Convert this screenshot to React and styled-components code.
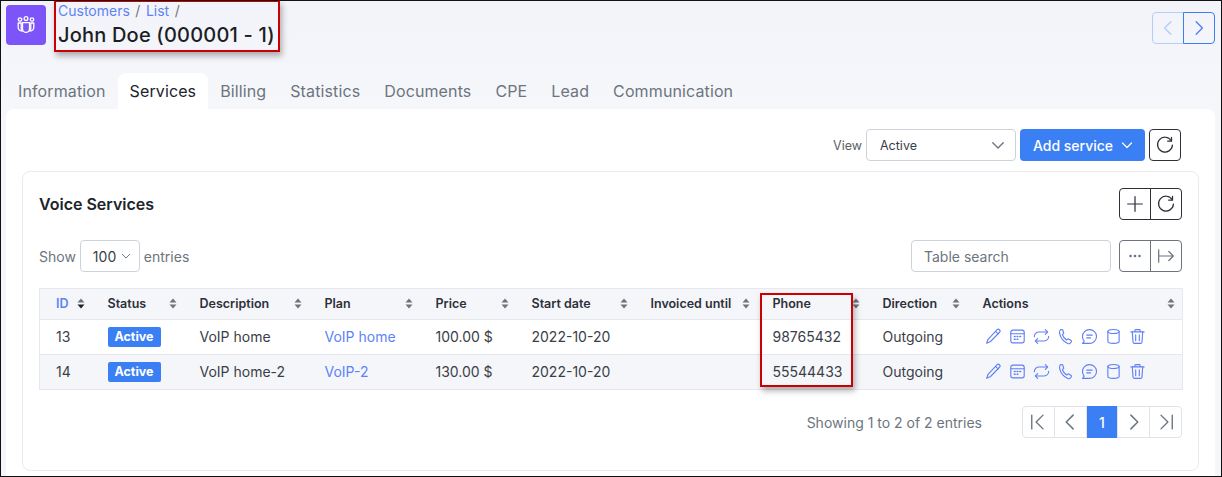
import React from "react";
import styled, { createGlobalStyle } from "styled-components";

const GlobalStyle = createGlobalStyle`
  html, body {
    margin: 0;
    padding: 0;
    background: #fff;
  }
  * {
    box-sizing: border-box;
  }
`;

const Frame = styled.div`
  position: relative;
  width: 1222px;
  height: 477px;
  border: 1px solid #111;
  background: linear-gradient(#f3f4f9, #f6f7fb 110px);
  font-family: Inter, "Noto Sans", sans-serif;
  font-size: 14px;
  color: #2d3039;
  overflow: hidden;
  display: flex;
  flex-direction: column;
`;

const Header = styled.header`
  height: 72px;
  padding: 4px 6px 0 5px;
  display: flex;
  align-items: flex-start;
`;

const Logo = styled.div`
  width: 40px;
  height: 40px;
  border-radius: 4px;
  background: #7c54f8;
  display: flex;
  align-items: center;
  justify-content: center;
  color: #fff;
`;

const TitleBlock = styled.div`
  margin-left: 12px;
  flex: 1;
`;

const Crumbs = styled.div`
  display: flex;
  gap: 5.5px;
  line-height: 14px;
  margin-top: -1px;
  color: #6c757d;
  font-size: 14px;
`;

const Crumb = styled.a`
  color: #5c83f7;
`;

const Title = styled.h1`
  margin: 5px 0 0 0;
  font-size: 20px;
  line-height: 24px;
  font-weight: 500;
  letter-spacing: 0.2px;
  color: #1b1e26;
`;

const PagerGroup = styled.div`
  display: flex;
  margin-top: 7px;
`;

const NavButton = styled.div`
  width: 32px;
  height: 32px;
  display: flex;
  align-items: center;
  justify-content: center;
  color: ${(p) => (p.$off ? "#b3cbfa" : "#4f7df5")};
  border: 1px solid ${(p) => (p.$off ? "#b3cefa" : "#3b7ff5")};
  border-radius: ${(p) => (p.$first ? "4px 0 0 4px" : "0 4px 4px 0")};
  margin-left: ${(p) => (p.$first ? 0 : -1)}px;
`;

const Tabs = styled.nav`
  height: 36px;
  padding-left: 5px;
  display: flex;
  align-items: stretch;
`;

const Tab = styled.div`
  padding: 0 12px;
  font-size: 16px;
  letter-spacing: 0.12px;
  line-height: 36px;
  color: ${(p) => (p.$active ? "#20232b" : "#6c757d")};
  background: ${(p) => (p.$active ? "#fff" : "transparent")};
  border-radius: 8px 8px 0 0;
`;

const Panel = styled.main`
  flex: 1;
  margin: 0 6px 0 5px;
  background: #fff;
  border-radius: 8px 8px 0 0;
  padding: 20px 16px 0 16px;
  display: flex;
  flex-direction: column;
`;

const TopTools = styled.div`
  display: flex;
  justify-content: flex-end;
  align-items: center;
  height: 32px;
  padding-right: 18px;
`;

const ViewLabel = styled.span`
  font-size: 12.5px;
  color: #5b616b;
  margin-right: 4px;
`;

const SelectBox = styled.div`
  width: ${(p) => p.$width}px;
  height: 32px;
  border: 1px solid #ced2da;
  border-radius: 4px;
  background: #fff;
  display: flex;
  align-items: center;
  justify-content: space-between;
  padding: ${(p) => p.$padding};
  font-size: ${(p) => p.$size || 14}px;
  color: #3a3e47;
`;

const AddButton = styled.div`
  width: 125px;
  height: 32px;
  margin-left: 4px;
  border-radius: 4px;
  background: #3b7ff5;
  color: #fff;
  font-size: 14px;
  font-weight: 500;
  display: flex;
  align-items: center;
  justify-content: center;
  gap: 8px;
  padding-left: 1px;
`;

const OutlineButton = styled.div`
  width: 32px;
  height: 32px;
  margin-left: 4px;
  border: 1px solid #2d3039;
  border-radius: 4px;
  display: flex;
  align-items: center;
  justify-content: center;
  color: #2d3039;
`;

const ToolGroup = styled.div`
  display: flex;
  width: 63px;
  height: 32px;
  border: 1px solid ${(p) => (p.$muted ? "#6c757d" : "#2d3039")};
  border-radius: 4px;
  color: ${(p) => (p.$muted ? "#6c757d" : "#2d3039")};
`;

const ToolCell = styled.div`
  flex: 1;
  display: flex;
  align-items: center;
  justify-content: center;
  & + & {
    border-left: 1px solid currentColor;
  }
`;

const Card = styled.section`
  margin-top: 10px;
  height: 300px;
  border: 1px solid #e9ebef;
  border-radius: 8px;
  padding: 16px 16px 0 16px;
`;

const CardHead = styled.div`
  height: 32px;
  display: flex;
  align-items: center;
  justify-content: space-between;
`;

const CardTitle = styled.h2`
  margin: 0;
  font-size: 16px;
  font-weight: 600;
  color: #20232b;
`;

const FilterRow = styled.div`
  margin-top: 20px;
  height: 32px;
  display: flex;
  align-items: center;
  justify-content: space-between;
  color: #6c757d;
`;

const FilterSide = styled.div`
  display: flex;
  align-items: center;
  gap: 4px;
`;

const Search = styled.div`
  width: 200px;
  height: 32px;
  margin-right: 4px;
  border: 1px solid #ced2da;
  border-radius: 4px;
  padding: 0 12px;
  line-height: 32px;
  color: #6c757d;
`;

const Table = styled.table`
  margin-top: 16px;
  width: 1143px;
  table-layout: fixed;
  border-collapse: collapse;
  border: 1px solid #e6e8ee;
`;

const Col = styled.col`
  width: ${(p) => p.$width}px;
`;

const Th = styled.th`
  height: 31px;
  padding: 0 0 2px 16px;
  background: #f5f6fa;
  font-size: 12.5px;
  font-weight: 600;
  text-align: left;
  color: ${(p) => (p.$link ? "#5c83f7" : "#2d3039")};
  border-bottom: 1px solid #e6e8ee;
`;

const ThInner = styled.div`
  display: flex;
  align-items: center;
  justify-content: space-between;
  padding-right: 7px;
  white-space: nowrap;
`;

const Row = styled.tr`
  background: ${(p) => (p.$alt ? "#f5f6fa" : "#fff")};
`;

const Td = styled.td`
  height: 35px;
  padding: 0 0 2px 16px;
  font-size: 14px;
  white-space: nowrap;
  color: #3a3e47;
  border-bottom: 1px solid #e6e8ee;
`;

const TextLink = styled.a`
  color: #5c83f7;
`;

const Badge = styled.span`
  display: inline-block;
  width: 53px;
  height: 20px;
  margin-top: 2px;
  border-radius: 2px;
  background: #3b7ff5;
  color: #fff;
  font-size: 12.5px;
  font-weight: 700;
  line-height: 20px;
  text-align: center;
  vertical-align: middle;
`;

const ActionRow = styled.div`
  display: flex;
  align-items: center;
  gap: 7px;
  margin-left: 2px;
  color: #5f7ff6;
`;

const Footer = styled.div`
  margin-top: 16px;
  display: flex;
  justify-content: flex-end;
  align-items: center;
  height: 32px;
  color: #6c757d;
`;

const Pagination = styled.div`
  display: flex;
  width: 160px;
  margin-left: 40px;
  border: 1px solid #e0e3e9;
  border-radius: 4px;
  height: 32px;
  color: #6c757d;
`;

const PageCell = styled.div`
  flex: 1;
  margin: -1px 0;
  height: 32px;
  display: flex;
  align-items: center;
  justify-content: center;
  font-weight: 500;
  background: ${(p) => (p.$active ? "#3b7ff5" : "transparent")};
  color: ${(p) => (p.$active ? "#fff" : "inherit")};
  & + & {
    border-left: 1px solid #e0e3e9;
  }
`;

const Highlight = styled.div`
  position: absolute;
  left: ${(p) => p.$x}px;
  top: ${(p) => p.$y}px;
  width: ${(p) => p.$w}px;
  height: ${(p) => p.$h}px;
  border: 2px solid #cc0000;
  box-shadow: 2px 4px 6px rgba(0, 0, 0, 0.3);
  pointer-events: none;
`;

const Glyph = ({ size = 16, w = 1.2, children }) => (
  <svg
    width={size}
    height={size}
    viewBox="0 0 16 16"
    fill="none"
    stroke="currentColor"
    strokeWidth={w}
    strokeLinecap="round"
    strokeLinejoin="round"
  >
    {children}
  </svg>
);

const TeamIcon = () => (
  <svg width="20" height="20" viewBox="0 0 20 20" fill="none" stroke="currentColor" strokeWidth="1.3" strokeLinejoin="round">
    <circle cx="4" cy="4.5" r="1.7" />
    <circle cx="10" cy="3.6" r="1.9" />
    <circle cx="16" cy="4.5" r="1.7" />
    <path d="M2.2 8h3v5.6c0 1 .4 1.9 1 2.6-2.4-.4-4-1.8-4-4z" />
    <path d="M17.8 8h-3v5.6c0 1-.4 1.9-1 2.6 2.4-.4 4-1.8 4-4z" />
    <path d="M6.5 7.6h7v6.2c0 2-1.6 3.6-3.5 3.6s-3.5-1.6-3.5-3.6z" />
  </svg>
);

const Refresh = ({ size = 18 }) => (
  <Glyph size={size} w={1.1}>
    <path d="M13.6 4.2A6.6 6.6 0 1 0 14.6 8" />
    <path d="M10.4 4.6h3.4V1.2" />
  </Glyph>
);

const Chevron = ({ size = 12, color }) => (
  <svg width={size} height={size} viewBox="0 0 12 12" fill="none" stroke={color || "currentColor"} strokeWidth="1.2" strokeLinecap="round" strokeLinejoin="round">
    <path d="M1.5 4l4.5 4.5L10.5 4" />
  </svg>
);

const Left = ({ size = 18 }) => (
  <Glyph size={size}><path d="M10.5 2.5L5 8l5.5 5.500" /></Glyph>
);

const Right = ({ size = 18 }) => (
  <Glyph size={size}><path d="M5.5 2.5L11 8l-5.5 5.500" /></Glyph>
);

const SortIcon = ({ dark }) => (
  <svg width="8" height="11" viewBox="0 0 8 11">
    <path d="M4 0.5L7.5 4.5H0.5z" fill="#6c757d" />
    <path d="M4 10.5L0.5 6.5H7.5z" fill={dark ? "#20232b" : "#6c757d"} />
  </svg>
);

const actionIcons = [
  <path key="a" d="M11.2 1.8a1.5 1.5 0 0 1 2.5 2.2L5.2 12.7 1.6 14.4l1.3-3.8zM10 3.2l2.500 2.500" />,
  <g key="b">
    <rect x="1.7" y="2" width="12.6" height="12" rx="2" />
    <path d="M1.7 5.4h12.6" />
    <path d="M5 8h.8M7.6 8h.8M10.2 8h.8M5 10.6h.8M7.6 10.6h.8" strokeWidth="1.3" />
  </g>,
  <g key="c">
    <path d="M1.2 8.2c0-2.6 2-4.4 4.4-4.4h8" />
    <path d="M11.6 1.600l2.200 2.200-2.200 2.200" />
    <path d="M14.800 7.800c0 2.600-2 4.400-4.400 4.400h-8" />
    <path d="M4.400 14.400l-2.200-2.200 2.200-2.200" />
  </g>,
  <path key="d" d="M3.600 1.400L5.400 1.700c.3 1.200.6 2.200 1 3.200L5.100 6.300c.8 2.200 2 3.700 3.900 5l1.500-1.100 2.800 1.600c.4.300.4.800.1 1.200l-1 1.200c-.6.600-1.500.8-2.300.4C6.200 13 3.500 9.600 2.500 5.400c-.2-1 0-3.500 1.100-4z" />,
  <g key="e">
    <path d="M8 1.500c3.700 0 6.600 2.900 6.600 6.500S11.700 14.500 8 14.500H1.500l1.500-2.100A6.400 6.400 0 0 1 1.400 8C1.400 4.400 4.300 1.500 8 1.500z" />
    <path d="M5.400 6.700h5.200M5.400 9.300h3.600" />
  </g>,
  <g key="f">
    <ellipse cx="8" cy="3.300" rx="5.300" ry="1.900" />
    <path d="M2.700 3.300v9.400c0 1 2.400 1.800 5.300 1.800s5.300-.8 5.300-1.800V3.300" />
  </g>,
  <g key="g">
    <path d="M1.800 3.700h12.400M5.500 3.500V2.300c0-.5.400-.8.800-.8h3.400c.4 0 .8.300.8.800v1.200" />
    <path d="M3.100 3.800l.7 9.500c.1.700.6 1.200 1.300 1.200h5.800c.7 0 1.200-.5 1.300-1.200l.7-9.500" />
    <path d="M6.300 6.300v5.700M9.700 6.300v5.700" />
  </g>,
];

const columns = [
  { label: "ID", width: 52, link: true, dark: true },
  { label: "Status", width: 92 },
  { label: "Description", width: 125 },
  { label: "Plan", width: 111 },
  { label: "Price", width: 96 },
  { label: "Start date", width: 119 },
  { label: "Invoiced until", width: 122 },
  { label: "Phone", width: 110 },
  { label: "Direction", width: 100 },
  { label: "Actions", width: 216 },
];

const rows = [
  { id: 13, description: "VoIP home", plan: "VoIP home", price: "100.00 $", phone: "98765432" },
  { id: 14, description: "VoIP home-2", plan: "VoIP-2", price: "130.00 $", phone: "55544433" },
];

const tabs = ["Information", "Services", "Billing", "Statistics", "Documents", "CPE", "Lead", "Communication"];

export default function App() {
  return (
    <>
      <GlobalStyle />
      <Frame>
        <Header>
          <Logo>
            <TeamIcon />
          </Logo>
          <TitleBlock>
            <Crumbs>
              <Crumb>Customers</Crumb>
              <span>/</span>
              <Crumb>List</Crumb>
              <span>/</span>
            </Crumbs>
            <Title>John Doe (000001 - 1)</Title>
          </TitleBlock>
          <PagerGroup>
            <NavButton $first $off>
              <Left />
            </NavButton>
            <NavButton>
              <Right />
            </NavButton>
          </PagerGroup>
        </Header>

        <Tabs>
          {tabs.map((t) => (
            <Tab key={t} $active={t === "Services"}>
              {t}
            </Tab>
          ))}
        </Tabs>

        <Panel>
          <TopTools>
            <ViewLabel>View</ViewLabel>
            <SelectBox $width={150} $size={12.5} $padding="0 10px 0 13px">
              Active
              <Chevron size={14} color="#6c757d" />
            </SelectBox>
            <AddButton>
              Add service
              <Chevron />
            </AddButton>
            <OutlineButton>
              <Refresh />
            </OutlineButton>
          </TopTools>

          <Card>
            <CardHead>
              <CardTitle>Voice Services</CardTitle>
              <ToolGroup>
                <ToolCell>
                  <Glyph size={18} w={1.1}>
                    <path d="M8 1.5v13M1.5 8h13" />
                  </Glyph>
                </ToolCell>
                <ToolCell>
                  <Refresh />
                </ToolCell>
              </ToolGroup>
            </CardHead>

            <FilterRow>
              <FilterSide>
                Show
                <SelectBox $width={60} $padding="0 8px 0 12px">
                  100
                  <Chevron size={10} color="#6c757d" />
                </SelectBox>
                entries
              </FilterSide>
              <FilterSide>
                <Search>Table search</Search>
                <ToolGroup $muted>
                  <ToolCell>
                    <svg width="14" height="4" viewBox="0 0 14 4" fill="currentColor">
                      <circle cx="2.5" cy="2" r="1.3" />
                      <circle cx="7" cy="2" r="1.3" />
                      <circle cx="11.5" cy="2" r="1.3" />
                    </svg>
                  </ToolCell>
                  <ToolCell>
                    <Glyph size={18} w={1.1}>
                      <path d="M1.5 2.5v11M2 8h12.5M10.5 4l4 4-4 4" />
                    </Glyph>
                  </ToolCell>
                </ToolGroup>
              </FilterSide>
            </FilterRow>

            <Table>
              <colgroup>
                {columns.map((c) => (
                  <Col key={c.label} $width={c.width} />
                ))}
              </colgroup>
              <thead>
                <tr>
                  {columns.map((c) => (
                    <Th key={c.label} $link={c.link}>
                      <ThInner>
                        {c.label}
                        <SortIcon dark={c.dark} />
                      </ThInner>
                    </Th>
                  ))}
                </tr>
              </thead>
              <tbody>
                {rows.map((r, i) => (
                  <Row key={r.id} $alt={i === 1}>
                    <Td>{r.id}</Td>
                    <Td>
                      <Badge>Active</Badge>
                    </Td>
                    <Td>{r.description}</Td>
                    <Td>
                      <TextLink>{r.plan}</TextLink>
                    </Td>
                    <Td>{r.price}</Td>
                    <Td>2022-10-20</Td>
                    <Td />
                    <Td>{r.phone}</Td>
                    <Td>Outgoing</Td>
                    <Td>
                      <ActionRow>
                        {actionIcons.map((icon, k) => (
                          <Glyph key={k} size={17} w={1.05}>
                            {icon}
                          </Glyph>
                        ))}
                      </ActionRow>
                    </Td>
                  </Row>
                ))}
              </tbody>
            </Table>

            <Footer>
              Showing 1 to 2 of 2 entries
              <Pagination>
                <PageCell>
                  <Glyph size={20} w={1.1}>
                    <path d="M3 2.5v11M12 2.5L6.5 8l5.5 5.5" />
                  </Glyph>
                </PageCell>
                <PageCell>
                  <Left size={20} />
                </PageCell>
                <PageCell $active>1</PageCell>
                <PageCell>
                  <Right size={20} />
                </PageCell>
                <PageCell>
                  <Glyph size={20} w={1.1}>
                    <path d="M13 2.5v11M4 2.5L9.5 8 4 13.5" />
                  </Glyph>
                </PageCell>
              </Pagination>
            </Footer>
          </Card>
        </Panel>

        <Highlight $x={53} $y={-1} $w={226} $h={52} />
        <Highlight $x={759} $y={292} $w={93} $h={94} />
      </Frame>
    </>
  );
}
